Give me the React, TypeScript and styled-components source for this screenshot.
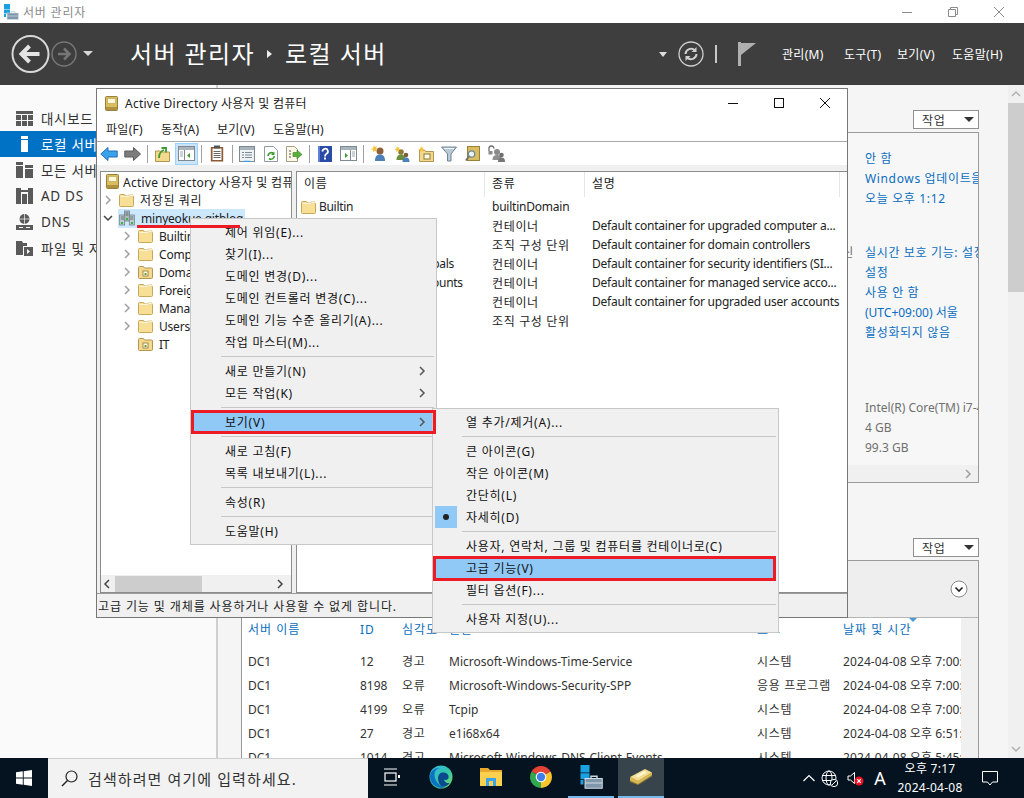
import React from 'react';
import styled, { createGlobalStyle } from 'styled-components';

const FONT = '"Noto Sans", "Noto Sans CJK KR", sans-serif';

const isLatin = (s: string) => /^[\x00-\x7f]*$/.test(s);

const GlobalStyle = createGlobalStyle`
  html, body {
    margin: 0;
    padding: 0;
    background: #f5f5f5;
  }
  * {
    box-sizing: border-box;
  }
  svg {
    display: block;
    flex-shrink: 0;
  }
`;

const Screen = styled.div`
  position: relative;
  width: 1024px;
  height: 798px;
  overflow: hidden;
  display: flex;
  flex-direction: column;
  font-family: ${FONT};
  font-size: 12px;
  letter-spacing: 0.65px;
  color: #222;
`;

/* 서버 관리자 창 */
const TitleBar = styled.div`
  height: 23px;
  flex: none;
  background: #fff;
  display: flex;
  align-items: center;
  padding-left: 3px;
  color: #8a8a8a;
`;

const TitleText = styled.span`
  margin-left: 4px;
  letter-spacing: 0.8px;
`;

const WinControls = styled.div`
  margin-left: auto;
  display: flex;
  height: 100%;
  padding-right: 2px;
`;

const WinControl = styled.div`
  width: 46px;
  display: flex;
  align-items: center;
  justify-content: center;
`;

const Header = styled.div`
  height: 62px;
  flex: none;
  background: #3e3e3e;
  display: flex;
  align-items: center;
  padding: 0 20px 0 11px;
  color: #fff;
`;

const Crumb = styled.div`
  margin-left: 29px;
  padding-bottom: 4px;
  display: flex;
  align-items: center;
  font-size: 24px;
  letter-spacing: 1.4px;
`;

const CrumbArrow = styled.span`
  width: 0;
  height: 0;
  margin: 4px 13px 0 12px;
  border-left: 5px solid #eee;
  border-top: 4px solid transparent;
  border-bottom: 4px solid transparent;
`;

const HeaderRight = styled.div`
  margin-left: auto;
  display: flex;
  align-items: center;
`;

const HeaderIconCell = styled.div<{ $w: number; $after?: number }>`
  width: ${p => p.$w}px;
  margin-right: ${p => p.$after ?? 0}px;
  display: flex;
  justify-content: center;
  align-items: center;
`;

const HeaderMenu = styled.span<{ $w: number }>`
  width: ${p => p.$w}px;
  white-space: nowrap;
  letter-spacing: 0.3px;
`;

const Body = styled.div`
  flex: 1;
  min-height: 0;
  display: flex;
`;

const Sidebar = styled.div`
  width: 218px;
  flex: none;
  background: #fafafa;
  border-right: 2px solid #cfcfcf;
  padding-top: 20px;
`;

const SideItem = styled.div<{ $active?: boolean }>`
  height: 26px;
  display: flex;
  align-items: center;
  gap: 8px;
  padding-left: 16px;
  font-size: 13.5px;
  letter-spacing: 0.7px;
  white-space: nowrap;
  color: ${p => (p.$active ? '#fff' : '#333')};
  background: ${p => (p.$active ? '#0072c6' : 'transparent')};
`;

const Main = styled.div`
  flex: 1;
  min-width: 0;
  background: #f5f5f5;
  padding: 25px 29px 0 23px;
  display: flex;
  flex-direction: column;
  overflow: hidden;
`;

const Scrollbar = styled.div`
  width: 16px;
  flex: none;
  background: #f0f0f0;
  display: flex;
  flex-direction: column;
  align-items: center;
`;

const ScrollThumb = styled.div`
  width: 100%;
  height: 189px;
  background: #cdcdcd;
  margin: 0 0 auto;
`;

const ScrollArrow = styled.div`
  height: 18px;
  display: flex;
  align-items: center;
  justify-content: center;
`;

const ActionButton = styled.div`
  align-self: flex-end;
  width: 66px;
  height: 19px;
  flex: none;
  background: #fff;
  border: 1px solid #8f8f8f;
  display: flex;
  align-items: center;
  justify-content: space-between;
  padding: 0 4px 0 8px;
  margin-bottom: 3px;
  color: #333;
`;

const DownTriangle = styled.span`
  width: 0;
  height: 0;
  border-top: 5px solid #333;
  border-left: 5px solid transparent;
  border-right: 5px solid transparent;
`;

const InfoPanel = styled.div`
  height: 351px;
  flex: none;
  border: 1px solid #9a9a9a;
  background: #f7f7f7;
  display: flex;
  flex-direction: column;
  margin-bottom: 55px;
  overflow: hidden;
`;

const InfoBody = styled.div`
  flex: 1;
  padding: 16px 0 0 623px;
  white-space: nowrap;
`;

const InfoGroup = styled.div<{ $gap: number }>`
  margin-bottom: ${p => p.$gap}px;
`;

const InfoRow = styled.div<{ $muted?: boolean; $latin?: boolean }>`
  position: relative;
  height: 20px;
  line-height: 20px;
  letter-spacing: ${p => (p.$latin ? 0 : 0.65)}px;
  color: ${p => (p.$muted ? '#707070' : '#0a6ec0')};
`;

const InfoLabelTail = styled.span`
  position: absolute;
  right: 100%;
  margin-right: 11px;
  color: #707070;
`;

const InfoFooter = styled.div`
  height: 17px;
  background: #f0f0f0;
  display: flex;
  align-items: center;
  justify-content: flex-end;
  padding-right: 5px;
`;

const EventsPanel = styled.div`
  flex: 1;
  border: 1px solid #9a9a9a;
  border-bottom: 0;
  background: #fff;
  display: flex;
  flex-direction: column;
  min-height: 0;
`;

const EventsHead = styled.div`
  height: 57px;
  flex: none;
  background: #eeeeee;
  border-bottom: 1px solid #b5b5b5;
  display: flex;
  align-items: center;
  justify-content: flex-end;
  padding-right: 8px;
`;

const EventsBody = styled.div`
  flex: 1;
  display: flex;
  min-height: 0;
`;

const EventsTable = styled.div`
  flex: 1;
  min-width: 0;
  overflow: hidden;
`;

const EventsScroll = styled.div`
  width: 17px;
  flex: none;
  background: #f0f0f0;
`;

const EventCols = styled.div<{ $head?: boolean }>`
  display: grid;
  grid-template-columns: 112px 42px 47px 308px 86px 140px;
  width: 735px;
  height: ${p => (p.$head ? 31 : 24)}px;
  padding-left: 6px;
  align-items: ${p => (p.$head ? 'start' : 'center')};
  white-space: nowrap;
  color: ${p => (p.$head ? '#0a6ec0' : '#333')};
`;

const EventCell = styled.div<{ $spacing: number }>`
  letter-spacing: ${p => p.$spacing}px;
`;

const HeadCell = styled.div`
  position: relative;
  height: 24px;
  line-height: 24px;
  letter-spacing: 1px;
`;

const SortMark = styled.span`
  position: absolute;
  left: 66px;
  top: 0;
  width: 0;
  height: 0;
  border-top: 4px solid #4a9bd8;
  border-left: 4px solid transparent;
  border-right: 4px solid transparent;
`;

/* Active Directory 창 */
const AdWindow = styled.div`
  position: absolute;
  left: 96px;
  top: 88px;
  width: 752px;
  height: 530px;
  background: #fff;
  border: 1px solid #777;
  display: flex;
  flex-direction: column;
  z-index: 2;
`;

const AdTitle = styled.div`
  height: 28px;
  flex: none;
  display: flex;
  align-items: center;
  padding-left: 8px;
`;

const AdTitleText = styled.span`
  margin-left: 7px;
  letter-spacing: 0.25px;
`;

const AdControls = styled.div`
  margin-left: auto;
  margin-right: -1px;
  display: flex;
  height: 100%;
`;

const AdControl = styled.div`
  width: 46px;
  display: flex;
  align-items: center;
  justify-content: center;
`;

const MenuBar = styled.div`
  height: 25px;
  flex: none;
  display: flex;
  align-items: center;
  padding-left: 9px;
  border-bottom: 1px solid #a8a8a8;
`;

const MenuBarItem = styled.span<{ $w: number }>`
  width: ${p => p.$w}px;
  white-space: nowrap;
  letter-spacing: 0.3px;
`;

const Toolbar = styled.div`
  height: 23px;
  flex: none;
  display: flex;
  align-items: center;
`;

const ToolButton = styled.div<{ $active?: boolean }>`
  width: 23.5px;
  height: 22px;
  display: flex;
  align-items: center;
  justify-content: center;
  background: ${p => (p.$active ? '#cce4f7' : 'transparent')};
  border: 1px solid ${p => (p.$active ? '#99d1ff' : 'transparent')};
`;

const ToolSep = styled.div`
  width: 1px;
  height: 18px;
  margin: 0 3px;
  background: #a0a0a0;
`;

const Panes = styled.div`
  flex: 1;
  min-height: 0;
  background: #f0f0f0;
  padding: 6px 0 0 3px;
  display: flex;
  gap: 4px;
  border-bottom: 1px solid #9a9a9a;
`;

const TreePane = styled.div`
  width: 192px;
  flex: none;
  background: #fff;
  border: 1px solid #8c8c8c;
  display: flex;
  flex-direction: column;
  overflow: hidden;
`;

const TreeScroll = styled.div`
  flex: 1;
  min-height: 0;
  overflow: hidden;
`;

const TreeRow = styled.div<{ $depth: number }>`
  height: 18px;
  display: flex;
  align-items: center;
  padding-left: ${p => 2 + p.$depth * 19}px;
  white-space: nowrap;
`;

const TreeToggle = styled.span`
  width: 15px;
  display: flex;
  flex: none;
`;

const TreeLabel = styled.span<{ $selected?: boolean; $latin?: boolean }>`
  display: flex;
  align-items: center;
  gap: 6px;
  height: 19px;
  padding: 0 2px 0 1px;
  letter-spacing: ${p => (p.$latin ? -0.2 : 0.65)}px;
  background: ${p => (p.$selected ? '#cce8ff' : 'transparent')};
`;

const RootRow = styled.div`
  height: 19px;
  display: flex;
  align-items: center;
  gap: 4px;
  padding-left: 5px;
  white-space: nowrap;
  letter-spacing: 0.25px;
`;

const HScroll = styled.div`
  height: 17px;
  flex: none;
  background: #f0f0f0;
  display: flex;
  align-items: center;
  justify-content: space-between;
  padding: 0 6px 0 1px;
`;

const HThumb = styled.div`
  width: 87px;
  height: 16px;
  margin: 0 auto 0 3px;
  background: #cdcdcd;
`;

const ListPane = styled.div`
  flex: 1;
  min-width: 0;
  background: #fff;
  border: 1px solid #8c8c8c;
  border-right: 0;
  overflow: hidden;
`;

const ListHead = styled.div`
  height: 25px;
  display: grid;
  grid-template-columns: 188px 100px 255px;
`;

const ListHeadCell = styled.div`
  padding-left: 7px;
  line-height: 24px;
  border-right: 1px solid #e6e6e6;
`;

const ListRow = styled.div`
  height: 19px;
  display: grid;
  grid-template-columns: 188px 100px 255px;
  align-items: center;
  white-space: nowrap;
`;

const ListName = styled.div`
  display: flex;
  align-items: center;
  gap: 3px;
  padding-left: 4px;
  letter-spacing: -0.3px;
`;

const ListCell = styled.div<{ $latin?: boolean }>`
  padding-left: 7px;
  letter-spacing: ${p => (p.$latin ? -0.23 : 0.65)}px;
`;

const StatusBar = styled.div`
  height: 23px;
  flex: none;
  background: #f0f0f0;
  display: flex;
  align-items: center;
  padding-left: 1px;
  white-space: nowrap;
  letter-spacing: 0.9px;
`;

/* 컨텍스트 메뉴 */
const PopMenu = styled.div<{ $x: number; $y: number; $w: number }>`
  position: absolute;
  left: ${p => p.$x}px;
  top: ${p => p.$y}px;
  width: ${p => p.$w}px;
  background: #f0f0f0;
  border: 1px solid #c8c8c8;
  padding: 2px 2px 2px 1px;
  z-index: ${p => (p.$x > 300 ? 4 : 3)};
`;

const PopItem = styled.div<{ $hot?: boolean; $pad: number }>`
  position: relative;
  height: 22px;
  display: flex;
  align-items: center;
  justify-content: space-between;
  padding: 0 7px 0 ${p => p.$pad}px;
  white-space: nowrap;
  letter-spacing: 0.75px;
  color: #111;
  background: ${p => (p.$hot ? '#90c8f6' : 'transparent')};
`;

const PopSep = styled.div<{ $left: number }>`
  height: 1px;
  margin: 3px 0 3px ${p => p.$left}px;
  background: #c8c8c8;
`;

const CheckMark = styled.span`
  position: absolute;
  left: 1px;
  top: 0;
  width: 22px;
  height: 22px;
  background: #90c8f6;
  display: flex;
  align-items: center;
  justify-content: center;
  &::after {
    content: '';
    width: 6px;
    height: 6px;
    border-radius: 50%;
    background: #222;
  }
`;

/* 강조 표시 */
const RedBox = styled.div<{ $x: number; $y: number; $w: number; $h: number }>`
  position: absolute;
  left: ${p => p.$x}px;
  top: ${p => p.$y}px;
  width: ${p => p.$w}px;
  height: ${p => p.$h}px;
  border: 3px solid #ed1c24;
  z-index: 5;
`;

const RedLine = styled.div`
  position: absolute;
  left: 137px;
  top: 225px;
  width: 103px;
  height: 3px;
  background: #ed1c24;
  z-index: 5;
`;

/* 작업 표시줄 */
const Taskbar = styled.div`
  height: 40px;
  flex: none;
  background: #04131f;
  display: flex;
  align-items: stretch;
  color: #fff;
  position: relative;
  z-index: 6;
`;

const StartButton = styled.div`
  width: 48px;
  display: flex;
  align-items: center;
  justify-content: center;
`;

const SearchBox = styled.div`
  width: 320px;
  background: #f2f2f2;
  border-top: 1px solid #cfcfcf;
  display: flex;
  align-items: center;
  gap: 10px;
  padding-left: 13px;
  color: #333;
  font-size: 15px;
  letter-spacing: 1.1px;
  white-space: nowrap;
`;

const TaskList = styled.div`
  display: flex;
  gap: 4px;
`;

const TaskButton = styled.div<{ $open?: boolean; $focused?: boolean }>`
  width: 46px;
  display: flex;
  align-items: center;
  justify-content: center;
  background: ${p => (p.$focused ? '#38444c' : 'transparent')};
  border-bottom: 2px solid ${p => (p.$open ? '#76b9ed' : 'transparent')};
`;

const Tray = styled.div`
  margin-left: auto;
  display: flex;
  align-items: center;
  padding-right: 10px;
`;

const TrayCell = styled.div<{ $w: number }>`
  width: ${p => p.$w}px;
  display: flex;
  justify-content: center;
  align-items: center;
`;

const TrayLetter = styled.span`
  font-size: 18px;
  letter-spacing: 0;
`;

const Clock = styled.div`
  width: 72px;
  margin-left: 7px;
  text-align: center;
  line-height: 19px;
  white-space: nowrap;
  letter-spacing: 0.25px;
`;

/* 아이콘 */
const FolderIcon = () => (
  <svg width="15" height="14" viewBox="0 0 15 14">
    <path d="M.5 2.5q0-1 1-1h4l1 1.5h7q1 0 1 1v8.5q0 1-1 1h-12q-1 0-1-1z" fill="#f8df96" stroke="#c7a75a" />
    <path d="M1.5 3.5h12" stroke="#fff6d8" />
    <path d="M10 1.5h4v2h-4z" fill="#fdf3cf" stroke="#d8c68a" strokeWidth=".5" />
  </svg>
);

const OuIcon = () => (
  <svg width="15" height="14" viewBox="0 0 15 14">
    <path d="M.5 2.5q0-1 1-1h4l1 1.5h7q1 0 1 1v8.5q0 1-1 1h-12q-1 0-1-1z" fill="#f3d98e" stroke="#b6964e" />
    <rect x="5" y="6" width="5" height="5" fill="#fff9e0" stroke="#8a7a3a" strokeWidth=".8" />
    <rect x="6.5" y="8" width="2" height="2" fill="#7a9a3a" />
  </svg>
);

const SnapinIcon = () => (
  <svg width="13" height="15" viewBox="0 0 13 15">
    <rect x=".5" y=".5" width="12" height="14" rx="1" fill="#d9bd5e" stroke="#96803a" />
    <rect x="2.5" y="2.5" width="8" height="5" fill="#fdf8d8" stroke="#b9a04e" strokeWidth=".6" />
    <rect x="1" y="11" width="11" height="3" fill="#b0923e" />
  </svg>
);

const DomainIcon = () => (
  <svg width="16" height="16" viewBox="0 0 16 16">
    <rect x="5.5" y="1" width="5" height="10" fill="#aebcc0" stroke="#66757a" strokeWidth=".7" />
    <rect x=".7" y="5" width="5" height="10" fill="#c2cdd0" stroke="#66757a" strokeWidth=".7" />
    <rect x="10.3" y="5" width="5" height="10" fill="#c2cdd0" stroke="#66757a" strokeWidth=".7" />
    <path d="M1.8 7h3M1.8 9h3M6.5 3h3M6.5 5h3M11.3 7h3M11.3 9h3" stroke="#5b686c" />
    <rect x="2" y="12" width="2" height="2" fill="#3fb54a" />
    <rect x="12" y="12" width="2" height="2" fill="#3fb54a" />
    <rect x="7" y="8" width="2" height="2" fill="#3fb54a" />
  </svg>
);

const Chevron = ({ dir = 'right', color = '#a0a0a0' }: { dir?: 'right' | 'down' | 'left' | 'up'; color?: string }) => {
  const d = {
    right: 'M3 1l4 4-4 4',
    left: 'M7 1L3 5l4 4',
    down: 'M1 3l4 4 4-4',
    up: 'M1 7l4-4 4 4',
  }[dir];
  return (
    <svg width="10" height="10" viewBox="0 0 10 10">
      <path d={d} fill="none" stroke={color} strokeWidth="1.5" />
    </svg>
  );
};

const ServerManagerIcon = ({ size = 16 }: { size?: number }) => (
  <svg width={size} height={size} viewBox="0 0 16 16">
    <rect x="1" y="0" width="6" height="5" fill="#1ba1e2" />
    <rect x="1" y="5.5" width="6" height="4" fill="#1ba1e2" />
    <path d="M1 10h2v3H1z" fill="#1ba1e2" />
    <rect x="4" y="9" width="11.5" height="6.5" fill="#7e97ab" stroke="#dfe7ee" strokeWidth=".6" />
    <path d="M8 9V7.5h4V9" fill="none" stroke="#c8d4de" />
    <path d="M4 12h11.5" stroke="#dfe7ee" strokeWidth=".6" />
  </svg>
);

const CloseGlyph = ({ color }: { color: string }) => (
  <svg width="12" height="12" viewBox="0 0 12 12">
    <path d="M1 1l10 10M11 1L1 11" stroke={color} strokeWidth="1" />
  </svg>
);

const MinimizeGlyph = ({ color }: { color: string }) => (
  <svg width="10" height="10" viewBox="0 0 10 10">
    <path d="M0 5.5h10" stroke={color} />
  </svg>
);

const NavButtons = () => (
  <svg width="90" height="44" viewBox="0 0 90 44">
    <circle cx="19.5" cy="22" r="18" fill="none" stroke="#d8d8d8" strokeWidth="2" />
    <path d="M28.5 22H11M18.5 14l-8 8 8 8" fill="none" stroke="#e4e4e4" strokeWidth="4" />
    <circle cx="53" cy="22" r="12" fill="none" stroke="#767676" strokeWidth="1.5" />
    <path d="M47 22h11M53 16.5l5.5 5.5-5.5 5.5" fill="none" stroke="#767676" strokeWidth="2.5" />
    <path d="M72 19h10l-5 5z" fill="#d8d8d8" />
  </svg>
);

const RefreshButton = () => (
  <svg width="26" height="26" viewBox="0 0 26 26">
    <circle cx="13" cy="13" r="12" fill="none" stroke="#cfcfcf" strokeWidth="1.3" />
    <path d="M7.5 13a5.5 5.5 0 0 1 9.5-3.5M18.5 13A5.5 5.5 0 0 1 9 16.5" fill="none" stroke="#cfcfcf" strokeWidth="2" />
    <path d="M18.5 6v5h-5zM7.5 20v-5h5z" fill="#cfcfcf" />
  </svg>
);

const FlagIcon = () => (
  <svg width="18" height="24" viewBox="0 0 18 24">
    <rect x="0" y="0" width="3" height="24" fill="#b0b0b0" />
    <path d="M3 1h15L3 13z" fill="#b0b0b0" />
  </svg>
);

const sideIcons: Record<string, React.ReactNode> = {
  dash: (
    <svg width="17" height="15" viewBox="0 0 17 15" fill="#5a5a5a">
      <rect width="17" height="3" />
      <path d="M0 4h5v5H0zM6 4h5v5H6zM12 4h5v5h-5zM0 10h5v5H0zM6 10h5v5H6zM12 10h5v5h-5z" />
    </svg>
  ),
  local: (
    <svg width="17" height="16" viewBox="0 0 17 16" fill="#fff">
      <rect x="5" y="0" width="7" height="3" />
      <rect x="5" y="4" width="7" height="12" />
    </svg>
  ),
  all: (
    <svg width="17" height="16" viewBox="0 0 17 16" fill="#5a5a5a">
      <rect x="0" y="0" width="7" height="3" />
      <rect x="0" y="4" width="7" height="12" />
      <rect x="9" y="3" width="8" height="3" />
      <rect x="9" y="7" width="8" height="9" />
    </svg>
  ),
  adds: (
    <svg width="17" height="16" viewBox="0 0 17 16" fill="#5a5a5a">
      <path d="M0 0h5v16H0zM12 0h5v16h-5zM5 2h7v2H5z" />
      <path d="M6 6h5v10H6z" />
    </svg>
  ),
  dns: (
    <svg width="17" height="16" viewBox="0 0 17 16">
      <circle cx="8.5" cy="5" r="5" fill="#5a5a5a" />
      <path d="M3.5 5h10M8.5 0v10" stroke="#fafafa" strokeWidth=".7" />
      <rect x="0" y="11" width="17" height="5" fill="#5a5a5a" />
      <rect x="3" y="13" width="4" height="1" fill="#fafafa" />
      <rect x="10" y="13" width="4" height="1" fill="#fafafa" />
    </svg>
  ),
  files: (
    <svg width="17" height="16" viewBox="0 0 17 16" fill="#5a5a5a">
      <path d="M0 1h6l1 2h4v3H7v9H0z" />
      <path d="M8 7h9v9H8z" />
      <path d="M11 9l3 2.5-3 2.5z" fill="#fafafa" />
    </svg>
  ),
};

const toolIcons: Record<string, React.ReactNode> = {
  back: (
    <svg width="18" height="14" viewBox="0 0 18 14">
      <path d="M8 .5L.8 7 8 13.5V10h9.2V4H8z" fill="#3aa2ea" stroke="#1f6fb8" />
    </svg>
  ),
  forward: (
    <svg width="17" height="14" viewBox="0 0 17 14">
      <path d="M9.5.5L16.5 7l-7 6.5V10H.8V4h8.7z" fill="#7c7c7c" stroke="#5c5c5c" />
    </svg>
  ),
  up: (
    <svg width="15" height="16" viewBox="0 0 15 16">
      <path d="M.5 5h5l1 1h8v9.5H.5z" fill="#f3d98e" stroke="#b6964e" />
      <path d="M4 12C4 7 6 5 9 4M6.5 2H11v4.5" fill="none" stroke="#3f9b2f" strokeWidth="1.8" />
    </svg>
  ),
  tree: (
    <svg width="17" height="15" viewBox="0 0 17 15">
      <rect x=".5" y=".5" width="16" height="14" fill="#fff" stroke="#7d8a94" />
      <rect x="1" y="1" width="15" height="3" fill="#aab4bb" />
      <path d="M6.5 4v10" stroke="#7d8a94" />
      <path d="M12 7v5l-3-2.5z" fill="#3f9b2f" />
      <path d="M2 6h3M2 8h3M2 10h3" stroke="#9aa5ad" />
    </svg>
  ),
  clip: (
    <svg width="14" height="17" viewBox="0 0 14 17">
      <rect x=".8" y="2" width="12.4" height="14.5" fill="#8c5a34" />
      <rect x="2.5" y="3.5" width="9" height="11.5" fill="#fff" />
      <rect x="4" y=".5" width="6" height="3" fill="#555" />
      <path d="M3.5 6.5h7M3.5 8.5h7M3.5 10.5h7M3.5 12.5h7" stroke="#666" />
    </svg>
  ),
  props: (
    <svg width="16" height="16" viewBox="0 0 16 16">
      <rect x=".5" y=".5" width="15" height="15" fill="#eef2f5" stroke="#7d8a94" />
      <rect x="1" y="1" width="14" height="3" fill="#aab4bb" />
      <path d="M3 6.5h2M6 6.5h7M3 9h2M6 9h7M3 11.5h2M6 11.5h7" stroke="#7d8a94" />
      <path d="M5 15.5h6" stroke="#3aa2ea" strokeWidth="1.5" />
    </svg>
  ),
  refresh: (
    <svg width="14" height="16" viewBox="0 0 14 16">
      <path d="M.5.5h9l4 4v11H.5z" fill="#fff" stroke="#8f9aa2" />
      <path d="M4 10a3.3 3.3 0 0 1 5.5-2.5M10.3 10A3.3 3.3 0 0 1 5 12.5" fill="none" stroke="#3f9b2f" strokeWidth="1.6" />
      <path d="M10.5 5.5V9H7z" fill="#3f9b2f" />
    </svg>
  ),
  exportList: (
    <svg width="17" height="16" viewBox="0 0 17 16">
      <path d="M.5.5h8l3 3v12H.5z" fill="#fdf9e6" stroke="#a2a089" />
      <path d="M3 5h2M3 8h2M3 11h2" stroke="#555" />
      <path d="M7 6.5h4V4l5 4.5-5 4.5v-2.500H7z" fill="#58b03a" stroke="#3a7f26" strokeWidth=".6" />
    </svg>
  ),
  help: (
    <svg width="14" height="16" viewBox="0 0 14 16">
      <rect width="14" height="16" fill="#2a4aa8" />
      <rect x="0" y="0" width="2" height="16" fill="#5f7fd8" />
      <path d="M4.5 5.5a2.7 2.7 0 1 1 4 2.3C7.4 8.5 7 9 7 10.5" fill="none" stroke="#fff" strokeWidth="1.8" />
      <rect x="6" y="11.5" width="2" height="2" fill="#fff" />
    </svg>
  ),
  action: (
    <svg width="17" height="15" viewBox="0 0 17 15">
      <rect x=".5" y=".5" width="16" height="14" fill="#fff" stroke="#7d8a94" />
      <rect x="1" y="1" width="15" height="3" fill="#aab4bb" />
      <path d="M10.5 4v10" stroke="#7d8a94" />
      <path d="M5 7v5l3-2.5z" fill="#3f9b2f" />
      <path d="M12 6h3M12 8h3M12 10h3" stroke="#9aa5ad" />
    </svg>
  ),
  newUser: (
    <svg width="16" height="17" viewBox="0 0 16 17">
      <circle cx="9" cy="6" r="3.5" fill="#8c5f3c" />
      <path d="M4 16c0-5 2-6.5 5-6.5s5 1.5 5 6.5z" fill="#4d7fb8" />
      <path d="M3 0l1 2 2-1-1 2 2 1-2 .7.5 2-2-1-1.5 1.5V5L0 4l2-.8z" fill="#f6c33a" />
    </svg>
  ),
  newGroup: (
    <svg width="16" height="16" viewBox="0 0 16 16">
      <circle cx="7" cy="6" r="2.8" fill="#8f7a3a" />
      <path d="M2.5 14c0-4 2-5.5 4.5-5.5s4.5 1.5 4.500 5.5z" fill="#6b8f3a" />
      <circle cx="12" cy="9" r="2.3" fill="#7a5f3c" />
      <path d="M8.5 16c0-3.5 1.5-4.5 3.5-4.5s3.5 1 3.5 4.5z" fill="#4d7fb8" />
      <path d="M3 0l.8 1.7 1.7-.7-.7 1.7 1.7.8-1.7.6.5 1.7-1.8-.8L2.3 6V4.3L.5 3.5l1.8-.7z" fill="#f6c33a" />
    </svg>
  ),
  newOu: (
    <svg width="16" height="16" viewBox="0 0 16 16">
      <path d="M1.5 4h5l1 1.5h8V15.5h-14z" fill="#f3d98e" stroke="#b6964e" />
      <rect x="6" y="8" width="6" height="5" fill="#fff9e0" stroke="#8a7a3a" />
      <path d="M3 0l.8 1.7 1.7-.7-.7 1.7 1.7.8-1.7.6.5 1.7-1.8-.8L2.3 6V4.3L.5 3.5l1.8-.7z" fill="#f6c33a" />
    </svg>
  ),
  filter: (
    <svg width="16" height="16" viewBox="0 0 16 16">
      <path d="M.5 1h15L10 8v7H6.5V8z" fill="#b9c9d6" stroke="#6f8496" />
      <path d="M3 2.5h10" stroke="#eef4f8" />
    </svg>
  ),
  find: (
    <svg width="15" height="16" viewBox="0 0 15 16">
      <rect x="2.5" y=".5" width="12" height="14" fill="#d9bd5e" stroke="#96803a" />
      <circle cx="6.5" cy="8" r="3.2" fill="#e8f3fa" stroke="#6f8496" strokeWidth="1.2" />
      <path d="M4 10.5L.8 14.5" stroke="#6f6f6f" strokeWidth="1.8" />
    </svg>
  ),
  delegate: (
    <svg width="17" height="17" viewBox="0 0 17 17">
      <circle cx="9" cy="7" r="3" fill="#8a8a8a" />
      <path d="M4.5 15c0-4 2-5 4.5-5s4.5 1 4.5 5z" fill="#8f8f8f" />
      <circle cx="13.5" cy="10" r="2.3" fill="#6f6f6f" />
      <path d="M10 17c0-3.5 1.5-4.5 3.5-4.5S17 13.5 17 17z" fill="#777" />
      <path d="M1 6V3.5a2.5 2.5 0 0 1 5 0" fill="none" stroke="#6f6f6f" strokeWidth="1.3" />
      <rect x=".5" y="6" width="4" height="3.5" fill="#8a8a8a" />
    </svg>
  ),
};

const TaskIcons = {
  start: (
    <svg width="16" height="16" viewBox="0 0 16 16" fill="#fff">
      <path d="M0 2.3l6.8-1v6.2H0zM7.7 1.2L16 0v7.5H7.7zM0 8.4h6.8v6.3L0 13.7zM7.7 8.4H16V16l-8.3-1.2z" />
    </svg>
  ),
  search: (
    <svg width="17" height="17" viewBox="0 0 17 17">
      <circle cx="10.5" cy="6.5" r="5.5" fill="none" stroke="#222" strokeWidth="1.2" />
      <path d="M6.5 10.5L1 16" stroke="#222" strokeWidth="1.4" />
    </svg>
  ),
  taskView: (
    <svg width="17" height="18" viewBox="0 0 17 18" fill="none" stroke="#fff" strokeWidth="1.2">
      <path d="M1 1h13M1 17h13" />
      <rect x="2" y="5" width="11" height="8" />
      <rect x="15" y="7" width="2" height="3" fill="#fff" stroke="none" />
    </svg>
  ),
  edge: (
    <svg width="24" height="24" viewBox="0 0 24 24">
      <defs>
        <linearGradient id="edgeA" x1="0" y1="0" x2="1" y2="1">
          <stop offset="0" stopColor="#2fb5e8" />
          <stop offset=".55" stopColor="#34c7a8" />
          <stop offset="1" stopColor="#7bdc5a" />
        </linearGradient>
      </defs>
      <circle cx="12" cy="12" r="11.5" fill="url(#edgeA)" />
      <path d="M1 12C1 6 6 2.5 11 3c-5 1-6.5 5-5 10 1.5 6 7 9.5 12 8.5A11.5 11.5 0 0 1 1 12z" fill="#0c71c0" />
      <path d="M9 13c0-4 3-6 6-5.5 3.5.5 5 3 4.5 5.5-.5 2-3 2.5-4.5 1.5 1 3 3 4 5.5 3.5-2 3-5 4-7.5 3.5C10.5 20 9 17 9 13z" fill="#0a4a8c" />
    </svg>
  ),
  explorer: (
    <svg width="22" height="22" viewBox="0 0 22 22">
      <path d="M0 2h8l2 2h12v16H0z" fill="#e8a92c" />
      <rect x="0" y="6" width="22" height="14" fill="#fbd04f" />
      <rect x="6" y="12" width="10" height="8" fill="#3aa2ea" />
      <rect x="9" y="15" width="4" height="5" fill="#fbd04f" />
    </svg>
  ),
  chrome: (
    <svg width="24" height="24" viewBox="0 0 24 24">
      <path d="M12 12L2.5 6.5A11 11 0 0 1 21.5 6.5z" fill="#e34234" />
      <path d="M12 12L21.5 6.5A11 11 0 0 1 12 23z" fill="#f9c52c" />
      <path d="M12 12L12 23A11 11 0 0 1 2.5 6.5z" fill="#2fa84f" />
      <circle cx="12" cy="12" r="5.3" fill="#fff" />
      <circle cx="12" cy="12" r="4.2" fill="#3f7fe8" />
    </svg>
  ),
  app: (
    <svg width="24" height="20" viewBox="0 0 24 20">
      <path d="M1 12l15-9 7 3.5v3L9 18l-8-3z" fill="#8f7a3a" />
      <path d="M1 10l15-8 7 3.5L9 14z" fill="#f3dc8e" />
      <path d="M1 10l8 4v3l-8-3.5zM9 14l14-8.5V8L9 17z" fill="#d9b956" />
      <path d="M6 9l9-5 3 1.5-9 5z" fill="#fff6d0" />
    </svg>
  ),
  chevronUp: (
    <svg width="12" height="8" viewBox="0 0 12 8">
      <path d="M.5 7L6 1.5 11.5 7" fill="none" stroke="#fff" strokeWidth="1.2" />
    </svg>
  ),
  globe: (
    <svg width="17" height="17" viewBox="0 0 17 17">
      <g fill="none" stroke="#fff" strokeWidth="1">
        <circle cx="8" cy="8" r="7" />
        <ellipse cx="8" cy="8" rx="3" ry="7" />
        <path d="M1.2 5.5h13.6M1.2 10.5h13.6" />
      </g>
      <circle cx="13" cy="13" r="3.7" fill="#04131f" stroke="#fff" />
      <path d="M11 15l4-4" stroke="#fff" />
    </svg>
  ),
  speaker: (
    <svg width="17" height="15" viewBox="0 0 17 15">
      <path d="M1 5h2.500L7.500 1.500v11L3.500 9H1z" fill="none" stroke="#fff" />
      <circle cx="12" cy="10" r="4.5" fill="#e81123" />
      <path d="M10.2 8.2l3.6 3.6M13.8 8.2l-3.6 3.6" stroke="#fff" strokeWidth="1.2" />
    </svg>
  ),
  notify: (
    <svg width="16" height="15" viewBox="0 0 16 15">
      <path d="M.5.5h15V11h-5L8 14l-2.500-3h-5z" fill="none" stroke="#fff" />
    </svg>
  ),
};

const events = [
  ['DC1', '12', '경고', 'Microsoft-Windows-Time-Service', '시스템', '2024-04-08 오후 7:00:12'],
  ['DC1', '8198', '오류', 'Microsoft-Windows-Security-SPP', '응용 프로그램', '2024-04-08 오후 7:00:08'],
  ['DC1', '4199', '오류', 'Tcpip', '시스템', '2024-04-08 오후 7:00:01'],
  ['DC1', '27', '경고', 'e1i68x64', '시스템', '2024-04-08 오후 6:51:22'],
  ['DC1', '1014', '경고', 'Microsoft-Windows-DNS-Client-Events', '시스템', '2024-04-08 오후 5:45:10'],
];

const listRows = [
  ['Builtin', 'builtinDomain', ''],
  ['Computers', '컨테이너', 'Default container for upgraded computer a...'],
  ['Domain Controllers', '조직 구성 단위', 'Default container for domain controllers'],
  ['ForeignSecurityPrincipals', '컨테이너', 'Default container for security identifiers (SI...'],
  ['Managed Service Accounts', '컨테이너', 'Default container for managed service acco...'],
  ['Users', '컨테이너', 'Default container for upgraded user accounts'],
  ['IT', '조직 구성 단위', ''],
];

const treeChildren = [
  { name: 'Builtin', ou: false, more: true },
  { name: 'Computers', ou: false, more: true },
  { name: 'Domain Controllers', ou: true, more: true },
  { name: 'ForeignSecurityPrincipals', ou: false, more: true },
  { name: 'Managed Service Accounts', ou: false, more: true },
  { name: 'Users', ou: false, more: true },
  { name: 'IT', ou: true, more: false },
];

type MenuEntry = { label?: string; more?: boolean; hot?: boolean; checked?: boolean };

const contextMenu: MenuEntry[] = [
  { label: '제어 위임(E)...' },
  { label: '찾기(I)...' },
  { label: '도메인 변경(D)...' },
  { label: '도메인 컨트롤러 변경(C)...' },
  { label: '도메인 기능 수준 올리기(A)...' },
  { label: '작업 마스터(M)...' },
  {},
  { label: '새로 만들기(N)', more: true },
  { label: '모든 작업(K)', more: true },
  {},
  { label: '보기(V)', more: true, hot: true },
  {},
  { label: '새로 고침(F)' },
  { label: '목록 내보내기(L)...' },
  {},
  { label: '속성(R)' },
  {},
  { label: '도움말(H)' },
];

const viewMenu: MenuEntry[] = [
  { label: '열 추가/제거(A)...' },
  {},
  { label: '큰 아이콘(G)' },
  { label: '작은 아이콘(M)' },
  { label: '간단히(L)' },
  { label: '자세히(D)', checked: true },
  {},
  { label: '사용자, 연락처, 그룹 및 컴퓨터를 컨테이너로(C)' },
  { label: '고급 기능(V)', hot: true },
  { label: '필터 옵션(F)...' },
  {},
  { label: '사용자 지정(U)...' },
];

const PopupMenu = ({ items, x, y, w, pad }: { items: MenuEntry[]; x: number; y: number; w: number; pad: number }) => (
  <PopMenu $x={x} $y={y} $w={w}>
    {items.map((item, i) =>
      item.label ? (
        <PopItem key={i} $hot={item.hot} $pad={pad}>
          {item.checked && <CheckMark />}
          {item.label}
          {item.more && <Chevron color="#555" />}
        </PopItem>
      ) : (
        <PopSep key={i} $left={pad - 4} />
      )
    )}
  </PopMenu>
);

const ToolSet = ({ names }: { names: string[] }) => (
  <>
    {names.map(n => (
      <ToolButton key={n} $active={n === 'tree'}>
        {toolIcons[n]}
      </ToolButton>
    ))}
  </>
);

// 셀 종류별 자간
const eventSpacing = [0, 0, 0.65, 0, 0.65, 0.1];

export default function App() {
  return (
    <Screen>
      <GlobalStyle />

      <TitleBar>
        <ServerManagerIcon />
        <TitleText>서버 관리자</TitleText>
        <WinControls>
          <WinControl><MinimizeGlyph color="#8a8a8a" /></WinControl>
          <WinControl>
            <svg width="10" height="10" viewBox="0 0 10 10" fill="none" stroke="#8a8a8a">
              <path d="M2.5 2.5V.5h7v7h-2M.5 2.5h7v7h-7z" />
            </svg>
          </WinControl>
          <WinControl><CloseGlyph color="#8a8a8a" /></WinControl>
        </WinControls>
      </TitleBar>

      <Header>
        <NavButtons />
        <Crumb>
          서버 관리자
          <CrumbArrow />
          로컬 서버
        </Crumb>
        <HeaderRight>
          <svg width="8" height="5" viewBox="0 0 8 5"><path d="M0 0h8L4 5z" fill="#ddd" /></svg>
          <HeaderIconCell $w={48}><RefreshButton /></HeaderIconCell>
          <svg width="2" height="18" viewBox="0 0 2 18"><rect width="2" height="18" fill="#c8c8c8" /></svg>
          <HeaderIconCell $w={60} $after={5}><FlagIcon /></HeaderIconCell>
          <HeaderMenu $w={62}>관리(M)</HeaderMenu>
          <HeaderMenu $w={53}>도구(T)</HeaderMenu>
          <HeaderMenu $w={55}>보기(V)</HeaderMenu>
          <HeaderMenu $w={52}>도움말(H)</HeaderMenu>
        </HeaderRight>
      </Header>

      <Body>
        <Sidebar>
          <SideItem>{sideIcons.dash}대시보드</SideItem>
          <SideItem $active>{sideIcons.local}로컬 서버</SideItem>
          <SideItem>{sideIcons.all}모든 서버</SideItem>
          <SideItem>{sideIcons.adds}AD DS</SideItem>
          <SideItem>{sideIcons.dns}DNS</SideItem>
          <SideItem>{sideIcons.files}파일 및 저장소 서비스</SideItem>
        </Sidebar>

        <Main>
          <ActionButton>작업<DownTriangle /></ActionButton>
          <InfoPanel>
            <InfoBody>
              <InfoGroup $gap={34}>
                <InfoRow>안 함</InfoRow>
                <InfoRow>Windows 업데이트을</InfoRow>
                <InfoRow>오늘 오후 1:12</InfoRow>
              </InfoGroup>
              <InfoGroup $gap={55}>
                <InfoRow><InfoLabelTail>신</InfoLabelTail>실시간 보호 기능: 설정</InfoRow>
                <InfoRow>설정</InfoRow>
                <InfoRow>사용 안 함</InfoRow>
                <InfoRow $latin>(UTC+09:00) 서울</InfoRow>
                <InfoRow>활성화되지 않음</InfoRow>
              </InfoGroup>
              <InfoGroup $gap={0}>
                <InfoRow $muted $latin>Intel(R) Core(TM) i7-4770</InfoRow>
                <InfoRow $muted $latin>4 GB</InfoRow>
                <InfoRow $muted $latin>99.3 GB</InfoRow>
              </InfoGroup>
            </InfoBody>
            <InfoFooter><Chevron /></InfoFooter>
          </InfoPanel>

          <ActionButton>작업<DownTriangle /></ActionButton>
          <EventsPanel>
            <EventsHead>
              <svg width="22" height="22" viewBox="0 0 22 22">
                <circle cx="11" cy="11" r="8" fill="#fff" stroke="#8a8a8a" />
                <path d="M7.5 9.5L11 13l3.5-3.5" fill="none" stroke="#222" strokeWidth="1.6" />
              </svg>
            </EventsHead>
            <EventsBody>
              <EventsTable>
                <EventCols $head>
                  <HeadCell>서버 이름</HeadCell>
                  <HeadCell>ID</HeadCell>
                  <HeadCell>심각도</HeadCell>
                  <HeadCell>원본</HeadCell>
                  <HeadCell>로그</HeadCell>
                  <HeadCell>날짜 및 시간<SortMark /></HeadCell>
                </EventCols>
                {events.map(row => (
                  <EventCols key={row[1]}>
                    {row.map((cell, i) => (
                      <EventCell key={i} $spacing={eventSpacing[i]}>{cell}</EventCell>
                    ))}
                  </EventCols>
                ))}
              </EventsTable>
              <EventsScroll />
            </EventsBody>
          </EventsPanel>
        </Main>

        <Scrollbar>
          <ScrollArrow><Chevron dir="up" color="#b0b0b0" /></ScrollArrow>
          <ScrollThumb />
          <ScrollArrow><Chevron dir="down" color="#b0b0b0" /></ScrollArrow>
        </Scrollbar>
      </Body>

      <AdWindow>
        <AdTitle>
          <SnapinIcon />
          <AdTitleText>Active Directory 사용자 및 컴퓨터</AdTitleText>
          <AdControls>
            <AdControl><MinimizeGlyph color="#111" /></AdControl>
            <AdControl>
              <svg width="10" height="10" viewBox="0 0 10 10"><rect x=".5" y=".5" width="9" height="9" fill="none" stroke="#111" /></svg>
            </AdControl>
            <AdControl><CloseGlyph color="#111" /></AdControl>
          </AdControls>
        </AdTitle>

        <MenuBar>
          <MenuBarItem $w={55}>파일(F)</MenuBarItem>
          <MenuBarItem $w={56}>동작(A)</MenuBarItem>
          <MenuBarItem $w={56}>보기(V)</MenuBarItem>
          <MenuBarItem $w={60}>도움말(H)</MenuBarItem>
        </MenuBar>

        <Toolbar>
          <ToolSet names={['back', 'forward']} />
          <ToolSep />
          <ToolSet names={['up', 'tree']} />
          <ToolSep />
          <ToolSet names={['clip']} />
          <ToolSep />
          <ToolSet names={['props', 'refresh', 'exportList']} />
          <ToolSep />
          <ToolSet names={['help', 'action']} />
          <ToolSep />
          <ToolSet names={['newUser', 'newGroup', 'newOu', 'filter', 'find', 'delegate']} />
        </Toolbar>

        <Panes>
          <TreePane>
            <TreeScroll>
              <RootRow><SnapinIcon />Active Directory 사용자 및 컴퓨터 [DC1.minyeokue.gitblog]</RootRow>
              <TreeRow $depth={0}>
                <TreeToggle><Chevron /></TreeToggle>
                <TreeLabel><FolderIcon />저장된 쿼리</TreeLabel>
              </TreeRow>
              <TreeRow $depth={0}>
                <TreeToggle><Chevron dir="down" color="#444" /></TreeToggle>
                <TreeLabel $selected $latin><DomainIcon />minyeokue.gitblog</TreeLabel>
              </TreeRow>
              {treeChildren.map(c => (
                <TreeRow key={c.name} $depth={1}>
                  <TreeToggle>{c.more && <Chevron />}</TreeToggle>
                  <TreeLabel $latin>{c.ou ? <OuIcon /> : <FolderIcon />}{c.name}</TreeLabel>
                </TreeRow>
              ))}
            </TreeScroll>
            <HScroll>
              <Chevron dir="left" color="#444" />
              <HThumb />
              <Chevron color="#444" />
            </HScroll>
          </TreePane>

          <ListPane>
            <ListHead>
              <ListHeadCell>이름</ListHeadCell>
              <ListHeadCell>종류</ListHeadCell>
              <ListHeadCell>설명</ListHeadCell>
            </ListHead>
            {listRows.map(r => (
              <ListRow key={r[0]}>
                <ListName><FolderIcon />{r[0]}</ListName>
                <ListCell $latin={isLatin(r[1])}>{r[1]}</ListCell>
                <ListCell $latin>{r[2]}</ListCell>
              </ListRow>
            ))}
          </ListPane>
        </Panes>

        <StatusBar>고급 기능 및 개체를 사용하거나 사용할 수 없게 합니다.</StatusBar>
      </AdWindow>

      <PopupMenu items={contextMenu} x={190} y={218} w={247} pad={33} />
      <PopupMenu items={viewMenu} x={432} y={408} w={347} pad={32} />
      <RedLine />
      <RedBox $x={191} $y={410} $w={245} $h={24} />
      <RedBox $x={433} $y={556} $w={343} $h={25} />

      <Taskbar>
        <StartButton>{TaskIcons.start}</StartButton>
        <SearchBox>{TaskIcons.search}검색하려면 여기에 입력하세요.</SearchBox>
        <TaskList>
          <TaskButton>{TaskIcons.taskView}</TaskButton>
          <TaskButton>{TaskIcons.edge}</TaskButton>
          <TaskButton>{TaskIcons.explorer}</TaskButton>
          <TaskButton>{TaskIcons.chrome}</TaskButton>
          <TaskButton $open><ServerManagerIcon size={24} /></TaskButton>
          <TaskButton $open $focused>{TaskIcons.app}</TaskButton>
        </TaskList>
        <Tray>
          <TrayCell $w={24}>{TaskIcons.chevronUp}</TrayCell>
          <TrayCell $w={16}>{TaskIcons.globe}</TrayCell>
          <TrayCell $w={36}>{TaskIcons.speaker}</TrayCell>
          <TrayCell $w={14}><TrayLetter>A</TrayLetter></TrayCell>
          <Clock>오후 7:17<br />2024-04-08</Clock>
          <TrayCell $w={48}>{TaskIcons.notify}</TrayCell>
        </Tray>
      </Taskbar>
    </Screen>
  );
}
